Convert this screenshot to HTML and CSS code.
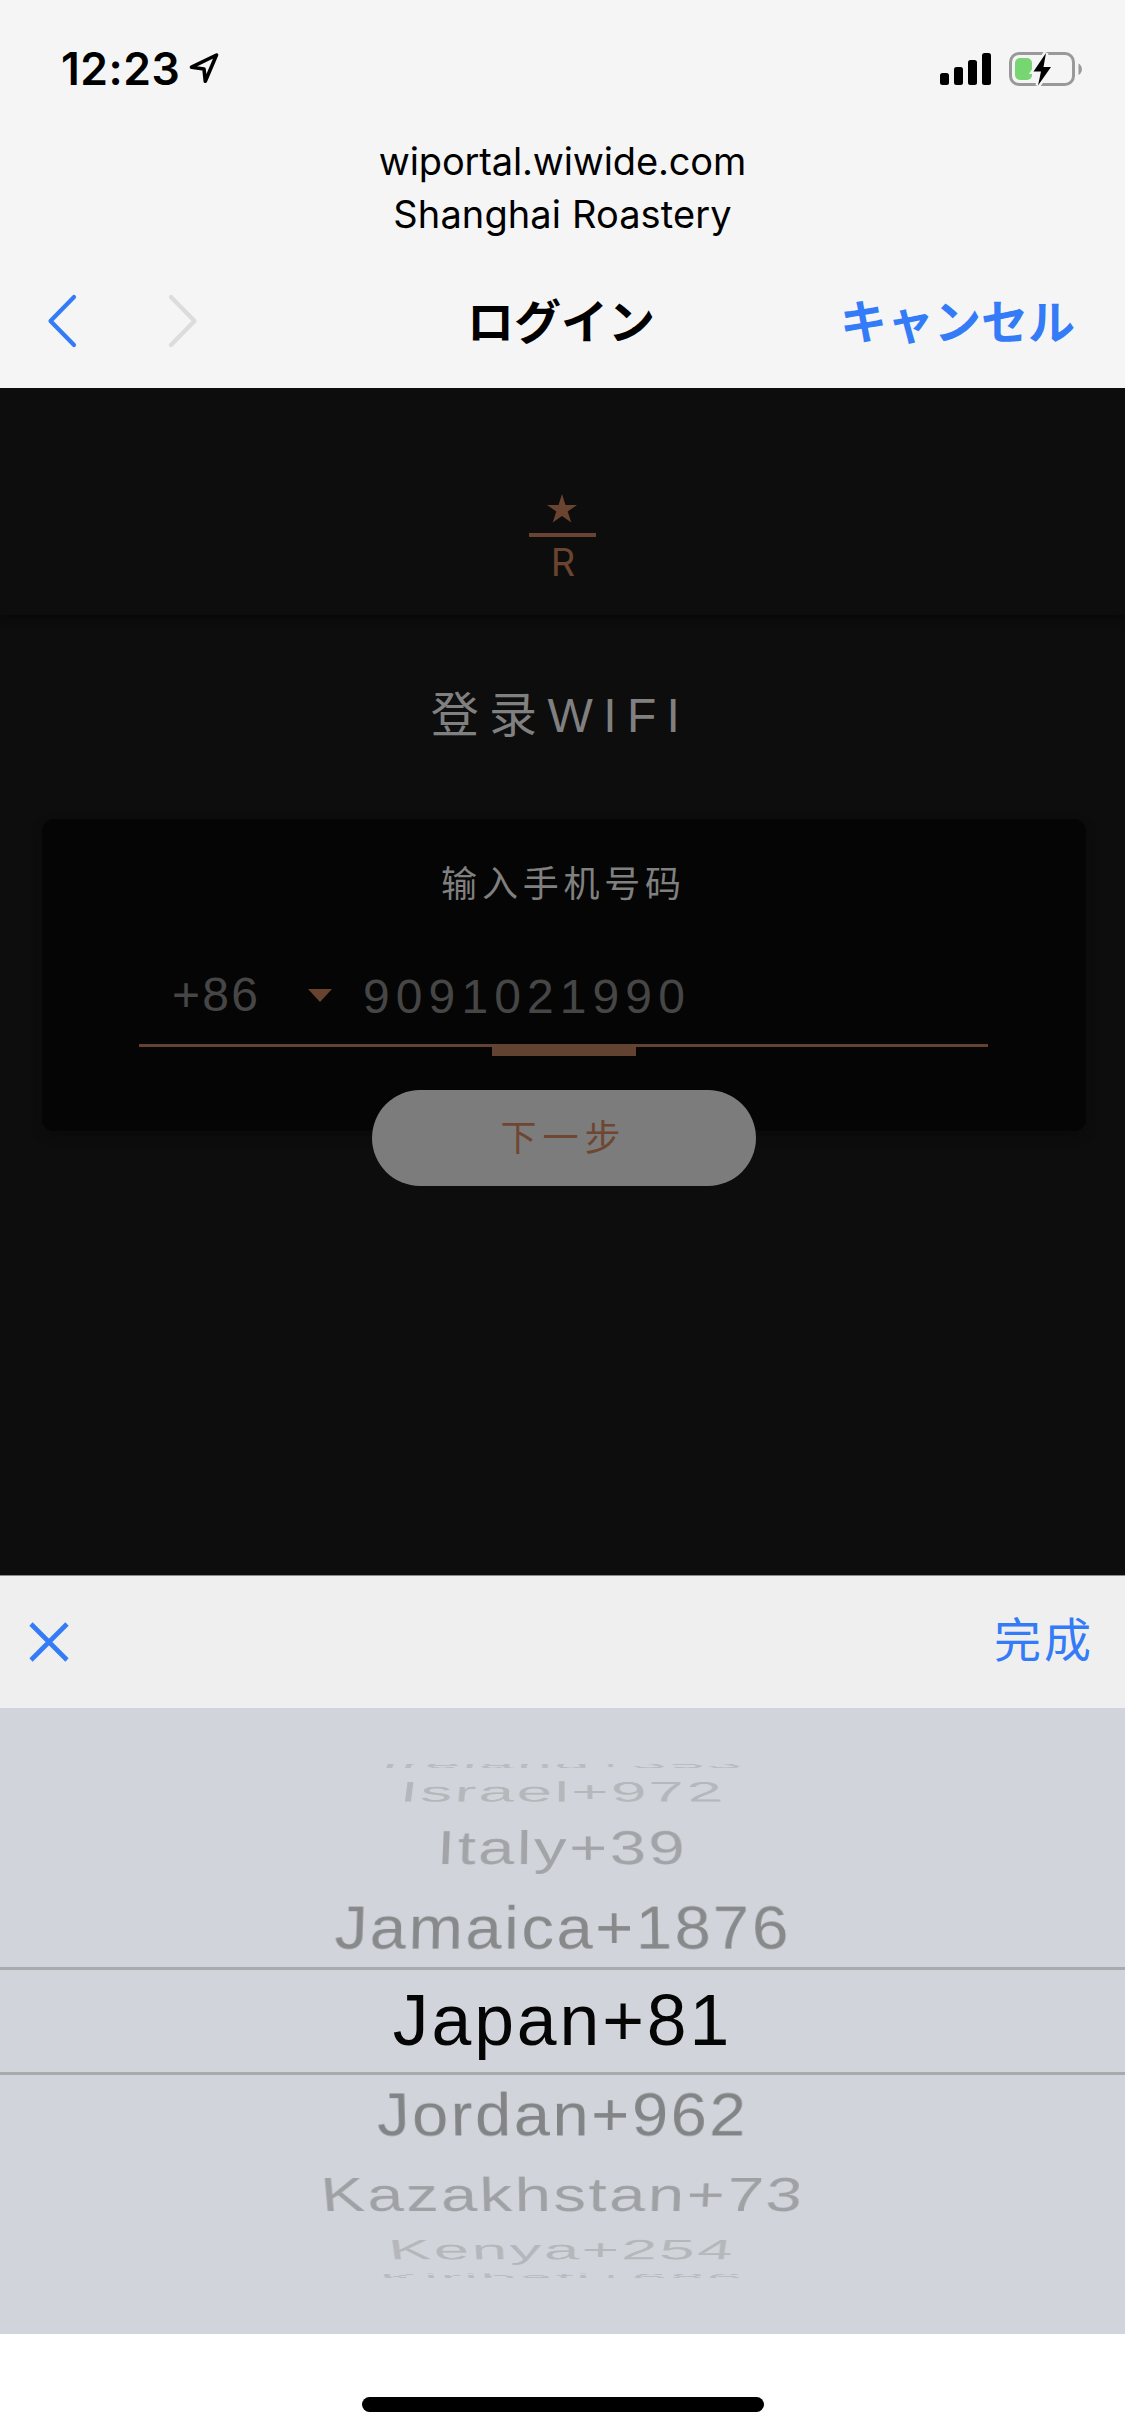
FILE: index.html
```html
<!DOCTYPE html>
<html lang="ja">
<head>
<meta charset="utf-8">
<title>ログイン</title>
<link rel="stylesheet" href="styles.css">
</head>
<body>
<div class="screen">
  <header class="top">
    <div class="status">
      <div class="status-left">
        <span class="time">12:23</span>
        <svg class="arrow" width="30" height="32" viewBox="0 0 30 32"><path d="M27.500 3 L2.500 15.200 L15 17 L16.300 29.200 Z" fill="none" stroke="#000" stroke-width="3.600" stroke-linejoin="round"/></svg>
      </div>
      <div class="status-right">
        <svg width="51" height="34" viewBox="0 0 51 34"><rect x="0" y="21" width="9" height="12" rx="2.5"/><rect x="14" y="15" width="9" height="18" rx="2.5"/><rect x="28" y="8" width="9" height="25" rx="2.5"/><rect x="42" y="1" width="9" height="32" rx="2.5"/></svg>
        <svg width="74" height="36" viewBox="0 0 74 36">
          <rect x="1.5" y="2.5" width="63" height="31" rx="8.5" fill="none" stroke="#999" stroke-width="3"/>
          <path d="M69.5 12.5 C74 15 74 21.500 69.500 24 Z" fill="#999"/>
          <rect x="6" y="7" width="17" height="22" rx="5" fill="#77d572"/>
          <path d="M37 2 L24.500 20.500 L32 20.500 L29 34.500 L42 16 L34.500 16 Z" fill="#000" stroke="#f5f5f5" stroke-width="5" stroke-linejoin="miter" paint-order="stroke"/>
        </svg>
      </div>
    </div>
    <div class="host"><span class="host-name">wiportal.wiwide.com</span><span class="host-place">Shanghai Roastery</span></div>
    <nav class="nav">
      <div class="nav-arrows">
        <svg width="30" height="54" viewBox="0 0 30 54"><path d="M27 3 L3.500 27 L27 51" fill="none" stroke="#347bf7" stroke-width="4.200" stroke-linecap="round" stroke-linejoin="round"/></svg>
        <svg width="30" height="54" viewBox="0 0 30 54"><path d="M3 3 L26.500 27 L3 51" fill="none" stroke="#dcdcdc" stroke-width="4.200" stroke-linecap="round" stroke-linejoin="round"/></svg>
      </div>
      <h1 class="nav-title">ログイン</h1>
      <span class="nav-cancel">キャンセル</span>
    </nav>
  </header>

  <main class="page" lang="zh-CN">
    <div class="brand">
      <svg width="30" height="29" viewBox="0 0 30 29"><path d="M15 0 L18.500 11 L30 11 L20.700 17.500 L24.300 28.500 L15 22 L5.700 28.500 L9.300 17.500 L0 11 L11.500 11 Z" fill="#6a4430"/></svg>
      <div class="brand-rule"></div>
      <span class="brand-letter">R</span>
    </div>
    <h2 class="login-title">登录WIFI</h2>
    <section class="card">
      <p class="card-label">输入手机号码</p>
      <div class="phone">
        <span class="code">+86</span>
        <svg class="caret" width="24" height="13" viewBox="0 0 24 13"><path d="M0 0 H24 L12 13 Z" fill="#68442f"/></svg>
        <span class="number">9091021990</span>
      </div>
      <div class="marker"></div>
      <button class="next">下一步</button>
    </section>
  </main>

  <div class="toolbar">
    <svg width="40" height="40" viewBox="0 0 40 40"><path d="M2 2 L38 38 M38 2 L2 38" stroke="#347bf7" stroke-width="4.600"/></svg>
    <span class="done" lang="zh-CN">完成</span>
  </div>
  <div class="picker">
    <div class="row r0"><span>Ireland+353</span></div>
    <div class="row r1"><span>Israel+972</span></div>
    <div class="row r2"><span>Italy+39</span></div>
    <div class="row r3"><span>Jamaica+1876</span></div>
    <div class="row selected"><span>Japan+81</span></div>
    <div class="row r5"><span>Jordan+962</span></div>
    <div class="row r6"><span>Kazakhstan+73</span></div>
    <div class="row r7"><span>Kenya+254</span></div>
    <div class="row r8"><span>Kiribati+686</span></div>
  </div>
  <footer class="home"><div class="home-bar"></div></footer>
</div>
</body>
</html>
```
FILE: styles.css
```css
* { box-sizing: border-box; }
body { margin: 0; background: #fff; }
h1, h2, p { margin: 0; font-weight: 400; }
svg { display: block; flex: none; }
span { white-space: nowrap; }

.screen { width: 1125px; height: 2436px; overflow: hidden; display: flex; flex-direction: column; }

.top { height: 388px; background: #f5f5f5; flex: none; }
.status { height: 134px; padding: 3px 42px 0 61px; display: flex; justify-content: space-between; align-items: center; }
.status-left { display: flex; align-items: center; gap: 9px; }
.time { font: 600 44.5px/50px Inter, sans-serif; letter-spacing: 0.5px; }
.arrow { margin-top: -2px; }
.status-right { display: flex; align-items: center; gap: 18px; }
.host { height: 106px; padding-top: 1px; display: flex; flex-direction: column; align-items: center; font: 400 38px/53px Inter, sans-serif; letter-spacing: -0.15px; }
.host-place { letter-spacing: 0.1px; }
.nav { height: 148px; padding: 0 50px 0 47px; display: grid; grid-template-columns: 1fr auto 1fr; align-items: center; font: 700 47px/60px "Noto Sans CJK JP", sans-serif; }
.nav-arrows { display: flex; gap: 91px; margin-top: 14px; }
.nav-title { font: inherit; margin-top: 10px; }
.nav-cancel { justify-self: end; color: #347bf7; margin-top: 10px; }

.page { height: 1187px; background: #0d0d0d; flex: none; overflow: hidden; }
.brand { height: 227px; padding: 106px 1px 0 0; display: flex; flex-direction: column; align-items: center; box-shadow: 0 2px 9px #070707; }
.brand-rule { width: 67px; height: 4px; margin-top: 10px; background: #6a4430; }
.brand-letter { font: 400 38px/40px Inter, sans-serif; color: #6a4430; margin: 5px 0 0 2px; }
.login-title { padding: 71px 4px 0 0; height: 204px; text-align: center; color: #808080; font: 400 48px/60px "Liberation Sans", "Noto Sans CJK SC", sans-serif; letter-spacing: 10.4px; }
.card { width: 1044px; height: 312px; margin: 0 auto 0 42px; padding: 37px 98px 0 97px; border-radius: 12px; background: #050505; box-shadow: 0 5px 10px #0b0b0b; display: flex; flex-direction: column; align-items: center; }
.card-label { font: 400 36px/50px "Noto Sans CJK SC", sans-serif; letter-spacing: 4.8px; padding-left: 0; color: #808080; }
.phone { width: 849px; height: 141px; padding: 61px 0 0 33px; border-bottom: 3px solid #624231; display: flex; align-items: flex-start; font: 400 48px/56px "Liberation Sans", sans-serif; color: #464646; flex: none; }
.code { width: 136px; letter-spacing: 2.2px; }
.caret { margin: 22px 31px 0 0; }
.number { letter-spacing: 6.1px; margin-top: 2px; }
.marker { width: 144px; height: 9px; background: #624231; flex: none; }
.next { width: 384px; height: 96px; margin-top: 34px; padding: 0 0 6px; border: 0; border-radius: 48px; background: #7c7c7c; color: #6e4631; font: 400 36px/50px "Noto Sans CJK SC", sans-serif; letter-spacing: 6px; flex: none; }

.toolbar { height: 133px; padding: 0 31px 0 29px; border-top: 1px solid #8b8b8b; background: #efefef; display: flex; justify-content: space-between; align-items: center; flex: none; }
.done { font: 400 47px/60px "Noto Sans CJK SC", sans-serif; letter-spacing: 3px; color: #347bf7; margin-top: -10px; }

.picker { height: 626px; padding-top: 56px; background: #d1d4da; flex: none; font: 400 65px/70px "Liberation Sans", sans-serif; }
.row { display: flex; justify-content: center; align-items: center; }
.row span { display: block; flex: none; letter-spacing: 2.6px; }
.r0 { height: 6px; overflow: hidden; color: #b9bcc1; }
.r0 span { transform: translateY(-2px) perspective(3000px) rotateX(82deg) scaleX(0.97); }
.r1 { height: 44px; color: #b5b7ba; }
.r1 span { transform: perspective(2500px) rotateX(64.5deg) scaleX(0.98); }
.r2 { height: 67px; padding-top: 1px; color: #a3a4a7; }
.r2 span { transform: perspective(2500px) rotateX(43deg); }
.r3 { height: 86px; padding-top: 8px; color: #88898b; }
.r3 span { transform: perspective(2500px) rotateX(21deg); }
.selected { height: 108px; padding-bottom: 3px; border: solid #a9aaab; border-width: 3px 0; font-size: 71.5px; color: #050505; }
.selected span { letter-spacing: 2.9px; }
.r5 { height: 78px; padding-top: 2px; color: #838486; }
.r5 span { transform: perspective(2500px) rotateX(-21deg); }
.r6 { height: 82px; padding-top: 1px; color: #a0a1a4; }
.r6 span { transform: perspective(2500px) rotateX(-43deg); }
.r7 { height: 30px; margin-bottom: 7px; color: #b5b7ba; }
.r7 span { transform: perspective(2500px) rotateX(-64.5deg) scaleX(0.98); }
.r8 { height: 6px; overflow: hidden; color: #b9bcc1; }
.r8 span { transform: translateY(2px) perspective(3000px) rotateX(-82deg) scaleX(0.97); }

.home { height: 102px; padding-top: 63px; background: #fff; flex: none; }
.home-bar { width: 402px; height: 15px; margin-left: 362px; border-radius: 8px; background: #000; }
```
